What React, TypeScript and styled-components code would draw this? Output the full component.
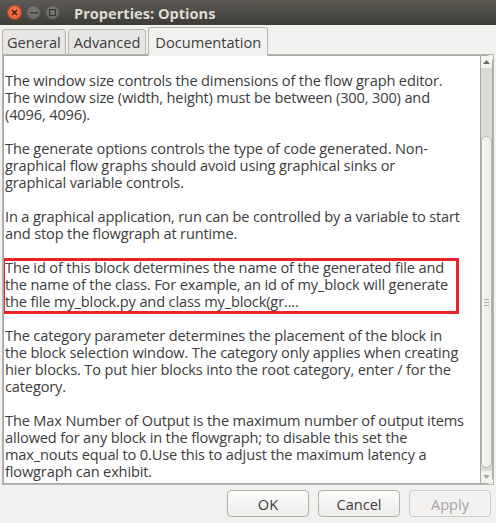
import React from "react";
import styled, { createGlobalStyle } from "styled-components";

const Global = createGlobalStyle`
  html, body { margin: 0; padding: 0; background: #f2f1f0; }
  body { font-family: "Open Sans", "Noto Sans", sans-serif; }
  *, *::before, *::after { box-sizing: border-box; }
`;

const Window = styled.div`
  width: 496px;
  height: 523px;
  display: flex;
  flex-direction: column;
  background: #f2f1f0;
  overflow: hidden;
`;

const TitleBar = styled.div`
  height: 25px;
  flex: none;
  display: flex;
  align-items: center;
  padding-left: 7px;
  background: linear-gradient(#5c5a53, #3d3c37);
`;

const WinButtons = styled.div`
  display: flex;
  gap: 4px;
  margin-right: 14px;
`;

const WinButton = styled.div<{ $close?: boolean }>`
  width: 15px;
  height: 15px;
  border-radius: 50%;
  display: flex;
  align-items: center;
  justify-content: center;
  background: ${(p) =>
    p.$close
      ? "radial-gradient(circle at 50% 40%, #f57b4e, #e0512a)"
      : "radial-gradient(circle at 50% 40%, #7e7c76, #5f5d57)"};
  box-shadow: inset 0 0 0 1px rgba(0, 0, 0, 0.25);
`;

const Title = styled.div`
  color: #dfdbd2;
  font-family: "Open Sans", sans-serif;
  font-weight: 700;
  font-size: 14.6px;
`;

const Tabs = styled.div`
  display: flex;
  align-items: flex-end;
  height: 30px;
  padding: 0 2px;
  flex: none;
  gap: 2px;
  position: relative;
  z-index: 1;
`;

const Tab = styled.div<{ $active?: boolean; $pad: number }>`
  height: ${(p) => (p.$active ? "29px" : "26px")};
  padding: 0 ${(p) => p.$pad}px;
  display: flex;
  align-items: center;
  font-size: 14.6px;
  color: #3c3c3c;
  border: 1px solid #b8b5b0;
  border-bottom: ${(p) => (p.$active ? "1px solid #f2f1f0" : "1px solid #b8b5b0")};
  border-radius: 3px 3px 0 0;
  background: ${(p) => (p.$active ? "#f2f1f0" : "#e7e6e4")};
  margin-bottom: ${(p) => (p.$active ? "-1px" : "0")};
`;

const Page = styled.div`
  margin: -1px 2px 0;
  border: 1px solid #b8b5b0;
  height: 431px;
  flex: none;
  display: flex;
`;

const TextArea = styled.div`
  flex: 1;
  background: #ffffff;
  border: 1px solid #a9a7a3;
  border-right: none;
  padding: 16px 0 0 1px;
  overflow: hidden;
  color: #3c3c3c;
  font-size: 14.6px;
  line-height: 17px;
  letter-spacing: -0.15px;
`;

const Para = styled.div<{ $boxed?: boolean }>`
  margin-bottom: 17px;
  position: relative;
  white-space: nowrap;
  &::before {
    content: "";
    display: ${(p) => (p.$boxed ? "block" : "none")};
    position: absolute;
    left: -3px;
    top: -1px;
    width: 457px;
    height: 56px;
    border: 3px solid #ec2227;
  }
`;

const Line = styled.div``;

const Scrollbar = styled.div`
  width: 13px;
  flex: none;
  border: 1px solid #a9a7a3;
  border-radius: 0 7px 7px 0;
  background: #dcdad7;
  display: flex;
  flex-direction: column;
  align-items: center;
`;

const Arrow = styled.div`
  height: 12px;
  width: 11px;
  display: flex;
  align-items: center;
  justify-content: center;
  background: #f4f3f2;
  flex: none;
`;

const Track = styled.div`
  flex: 1;
  width: 11px;
  padding-top: 68px;
  padding-bottom: 3px;
  display: flex;
  flex-direction: column;
`;

const Thumb = styled.div`
  flex: 1;
  border: 1px solid #b5b3af;
  border-radius: 6px;
  background: linear-gradient(90deg, #f7f7f6, #ecebea);
  display: flex;
  align-items: center;
  justify-content: center;
`;

const Grip = styled.div`
  width: 5px;
  height: 7px;
  background: repeating-linear-gradient(#a8a6a2 0 1px, transparent 1px 3px);
`;

const Footer = styled.div`
  flex: 1;
  display: flex;
  justify-content: flex-end;
  align-items: flex-start;
  gap: 9px;
  padding: 5px 5px 0 0;
`;

const Button = styled.button<{ $disabled?: boolean }>`
  width: 82px;
  height: 27px;
  border: 1px solid #b3b0ab;
  border-radius: 4px;
  background: ${(p) => (p.$disabled ? "#f3f2f1" : "linear-gradient(#fbfbfa, #eeedec)")};
  color: ${(p) => (p.$disabled ? "#a5a3a0" : "#3c3c3c")};
  border-color: ${(p) => (p.$disabled ? "#cdcbc8" : "#b3b0ab")};
  font-family: "Open Sans", sans-serif;
  font-size: 14.6px;
  padding: 0;
`;

const paragraphs: { lines: string[]; boxed?: boolean }[] = [
  {
    lines: [
      "The window size controls the dimensions of the flow graph editor.",
      "The window size (width, height) must be between (300, 300) and",
      "(4096, 4096).",
    ],
  },
  {
    lines: [
      "The generate options controls the type of code generated. Non-",
      "graphical flow graphs should avoid using graphical sinks or",
      "graphical variable controls.",
    ],
  },
  {
    lines: [
      "In a graphical application, run can be controlled by a variable to start",
      "and stop the flowgraph at runtime.",
    ],
  },
  {
    boxed: true,
    lines: [
      "The id of this block determines the name of the generated file and",
      "the name of the class. For example, an id of my_block will generate",
      "the file my_block.py and class my_block(gr....",
    ],
  },
  {
    lines: [
      "The category parameter determines the placement of the block in",
      "the block selection window. The category only applies when creating",
      "hier blocks. To put hier blocks into the root category, enter / for the",
      "category.",
    ],
  },
  {
    lines: [
      "The Max Number of Output is the maximum number of output items",
      "allowed for any block in the flowgraph; to disable this set the",
      "max_nouts equal to 0.Use this to adjust the maximum latency a",
      "flowgraph can exhibit.",
    ],
  },
];

export default function App() {
  return (
    <Window>
      <Global />
      <TitleBar>
        <WinButtons>
          <WinButton $close>
            <svg width="7" height="7" viewBox="0 0 7 7">
              <path d="M1 1L6 6M6 1L1 6" stroke="#3a1a10" strokeWidth="1.3" />
            </svg>
          </WinButton>
          <WinButton>
            <svg width="8" height="2" viewBox="0 0 8 2">
              <rect width="8" height="1.4" fill="#3b3a36" />
            </svg>
          </WinButton>
          <WinButton>
            <svg width="7" height="7" viewBox="0 0 7 7">
              <rect x="0.6" y="0.6" width="5.8" height="5.8" fill="none" stroke="#3b3a36" strokeWidth="1.2" />
            </svg>
          </WinButton>
        </WinButtons>
        <Title>Properties: Options</Title>
      </TitleBar>
      <Tabs>
        <Tab $pad={4}>General</Tab>
        <Tab $pad={5}>Advanced</Tab>
        <Tab $pad={6} $active>Documentation</Tab>
      </Tabs>
      <Page>
        <TextArea>
          {paragraphs.map((p, i) => (
            <Para key={i} $boxed={p.boxed}>
              {p.lines.map((l, j) => (
                <Line key={j}>{l}</Line>
              ))}
            </Para>
          ))}
        </TextArea>
        <Scrollbar>
          <Arrow>
            <svg width="7" height="4" viewBox="0 0 7 4">
              <path d="M0 4L3.5 0L7 4Z" fill="#6f6d69" />
            </svg>
          </Arrow>
          <Track>
            <Thumb>
              <Grip />
            </Thumb>
          </Track>
          <Arrow>
            <svg width="7" height="4" viewBox="0 0 7 4">
              <path d="M0 0L3.5 4L7 0Z" fill="#a8a6a2" />
            </svg>
          </Arrow>
        </Scrollbar>
      </Page>
      <Footer>
        <Button>OK</Button>
        <Button>Cancel</Button>
        <Button $disabled>Apply</Button>
      </Footer>
    </Window>
  );
}
